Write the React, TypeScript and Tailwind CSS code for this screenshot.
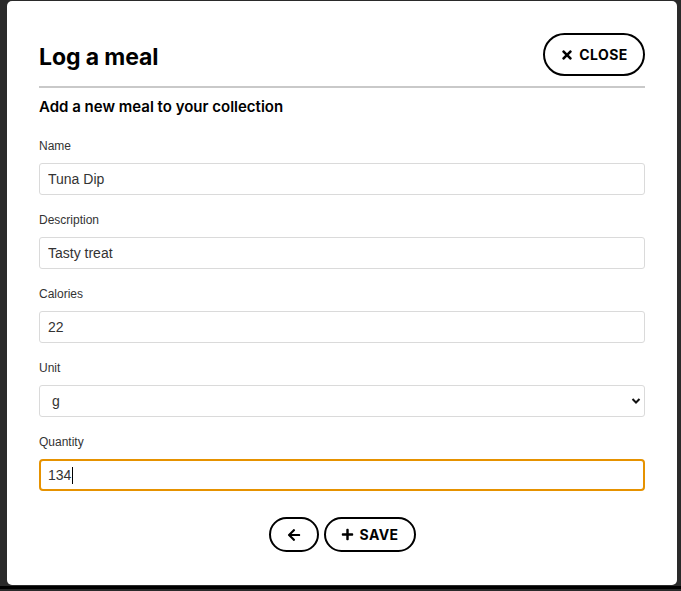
import { FaTimes, FaArrowLeft, FaPlus } from 'react-icons/fa';

const fields = [
  { label: 'Name', value: 'Tuna Dip' },
  { label: 'Description', value: 'Tasty treat' },
  { label: 'Calories', value: '22' },
];

function Label({ children }: { children: string }) {
  return (
    <label className="block text-[12px] leading-[18px] text-[#333] mb-2 font-['Liberation_Sans',Arial,sans-serif]">
      {children}
    </label>
  );
}

export default function App() {
  return (
    <div className="w-full h-[591px] bg-[#2a2a2a] pt-px overflow-hidden">
      <div className="ml-[7px] w-[670px] h-[584px] bg-white rounded-[5px] p-8 font-['Inter',sans-serif] text-black">
        {/* header */}
        <div className="flex items-center justify-between h-[43px]">
          <h1 className="text-[23px] font-bold leading-none mt-[5px] tracking-[-0.1px]">Log a meal</h1>
          <button className="h-[43px] w-[102px] rounded-full border-2 border-black flex items-center justify-center gap-[5px] text-[14px] font-bold tracking-[0.4px]">
            <FaTimes className="w-[14px] h-[14px]" />
            CLOSE
          </button>
        </div>
        <div className="h-[2px] bg-[#c9c9c9] mt-[10px]" />
        <h2 className="mt-2 text-[15px] font-semibold leading-[22px]">Add a new meal to your collection</h2>

        <form className="mt-[19px]">
          {fields.map(f => (
            <div key={f.label} className="mb-4">
              <Label>{f.label}</Label>
              <input
                defaultValue={f.value}
                className="w-full h-8 border border-[#dadada] rounded-[3px] px-[8px] text-[14px] text-[#333] font-['Liberation_Sans',Arial,sans-serif] outline-none"
              />
            </div>
          ))}
          <div className="mb-4">
            <Label>Unit</Label>
            <div className="relative">
              <select className="appearance-none w-full h-8 border border-[#dadada] rounded-[3px] px-[12px] text-[14px] text-[#333] bg-white font-['Liberation_Sans',Arial,sans-serif] outline-none">
                <option>g</option>
              </select>
              <svg className="absolute right-[4px] top-[12px] w-[10px] h-[8px]" viewBox="0 0 10 8" fill="none">
                <path d="M1.5 2l3.5 3.5L8.5 2" stroke="#111" strokeWidth="2" />
              </svg>
            </div>
          </div>
          <div className="mb-[26px]">
            <Label>Quantity</Label>
            <div className="w-full h-8 border-2 border-[#e69200] rounded-[4px] px-[7px] flex items-center text-[14px] text-[#333] font-['Liberation_Sans',Arial,sans-serif]">
              134<span className="w-px h-[17px] bg-black ml-px" />
            </div>
          </div>

          <div className="flex justify-center gap-[5px]">
            <button type="button" className="h-[35px] w-[50px] rounded-full border-2 border-black flex items-center justify-center">
              <FaArrowLeft className="w-[14px] h-[14px]" />
            </button>
            <button type="button" className="h-[35px] w-[92px] rounded-full border-2 border-black flex items-center justify-center gap-[6px] text-[14px] font-bold tracking-[0.4px]">
              <FaPlus className="w-[13px] h-[13px]" />
              SAVE
            </button>
          </div>
        </form>
      </div>
      <div className="h-[3px] bg-black mt-px" />
    </div>
  );
}
